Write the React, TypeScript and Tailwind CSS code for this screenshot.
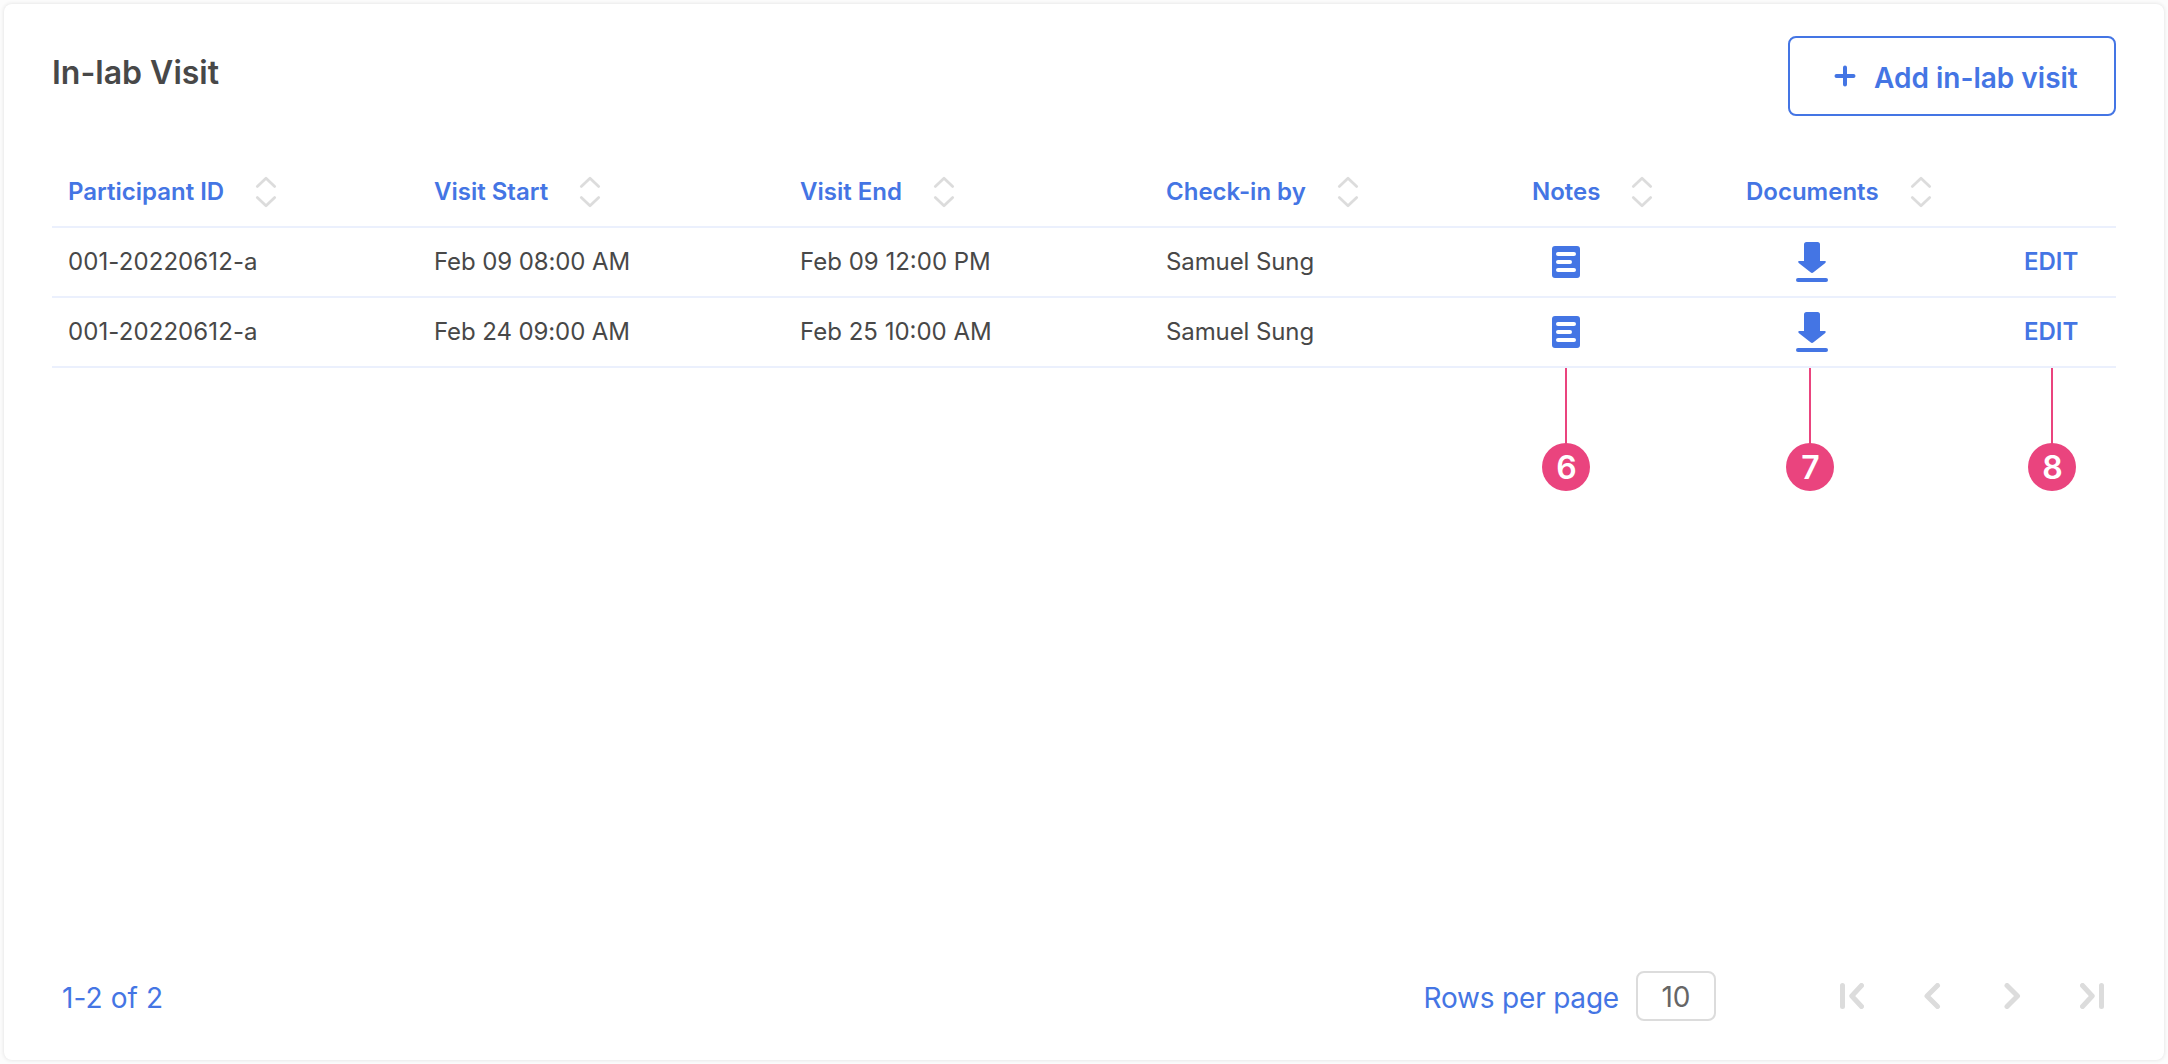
import React from "react";

const BLUE = "#4475e4";

const SortIcon = () => (
  <svg width="24" height="36" viewBox="0 0 24 36" fill="none" stroke="#dcdcdc" strokeWidth="2.8" strokeLinecap="round" strokeLinejoin="round" className="shrink-0">
    <path d="M3.300 12.400 12 4.300 20.700 12.400M3.300 23.600 12 31.700 20.700 23.600" />
  </svg>
);

const NotesIcon = () => (
  <svg width="28" height="32" viewBox="0 0 28 32" className="shrink-0">
    <rect width="28" height="32" rx="3" fill={BLUE} />
    <path d="M6 8H22M6 16H18M6 24H22" stroke="#fff" strokeWidth="4" strokeLinecap="round" />
  </svg>
);

const DownloadIcon = () => (
  <svg width="32" height="40" viewBox="0 0 32 40" fill={BLUE} className="shrink-0">
    <path d="M10.500 0H21.500Q24 0 24 2.500V19H29Q30.500 19.500 29.300 21L17.500 30.300Q16 31.500 14.500 30.300L2.700 21Q1.500 19.500 3 19H8V2.500Q8 0 10.500 0Z" />
    <rect y="36" width="32" height="4" rx="2" />
  </svg>
);

const columns = ["Participant ID", "Visit Start", "Visit End", "Check-in by", "Notes", "Documents"];

const rows = [
  { id: "001-20220612-a", start: "Feb 09 08:00 AM", end: "Feb 09 12:00 PM", by: "Samuel Sung" },
  { id: "001-20220612-a", start: "Feb 24 09:00 AM", end: "Feb 25 10:00 AM", by: "Samuel Sung" },
];

const pagerIcons = [
  "M2.500 2.500V23.500M21.500 2.500 11.800 13 21.500 23.500",
  "M17.500 2.500 7 13 17.500 23.500",
  "M7 2.500 17.500 13 7 23.500",
  "M2.500 2.500 12.200 13 2.500 23.500M21.500 2.500V23.500",
];

const grid = "grid grid-cols-[366px_366px_366px_366px_214px_278px_1fr] items-center pl-4 border-b-2 border-[#ebf0fd]";

const Marker = ({ n, place }: { n: number; place: string }) => (
  <div className={`absolute top-full flex w-12 flex-col items-center ${place}`}>
    <div className="h-[76px] w-[2px] bg-[#ea447e]" />
    <div className="-mt-px flex size-12 items-center justify-center rounded-full bg-[#ea447e] pt-[2px] pl-px text-[32px] leading-none font-semibold text-white">
      {n}
    </div>
  </div>
);

export default function App() {
  return (
    <div className="h-[1064px] w-[2168px] bg-[#fcfcfc] p-1 font-['Inter',sans-serif] text-[#484848]">
      <main className="flex h-[1056px] flex-col rounded-lg bg-white px-12 shadow-[0_0_4px_rgba(0,0,0,0.12)]">
        <header className="flex h-[154px] items-start justify-between pt-8">
          <h1 className="mt-[15px] text-[32px] leading-[44px] font-semibold">In-lab Visit</h1>
          <button className="flex h-20 w-[328px] items-center rounded-lg border-2 border-[#4475e4] pl-[43px] text-[28px] font-semibold text-[#4475e4]">
            <svg width="24" height="24" viewBox="0 0 24 24" fill="none" stroke={BLUE} strokeWidth="4" strokeLinecap="round" className="mr-[17px]">
              <path d="M12 3.500V20.500M3.500 12H20.500" />
            </svg>
            <span className="pt-[3px]">Add in-lab visit</span>
          </button>
        </header>

        <section className="relative text-2xl leading-8">
          <div className={`${grid} h-[70px] font-semibold text-[#4475e4]`}>
            {columns.map((c) => (
              <div key={c} className="flex items-center gap-[30px] whitespace-nowrap">
                {c}
                <SortIcon />
              </div>
            ))}
          </div>
          {rows.map((r, i) => (
            <div key={i} className={`${grid} h-[70px]`}>
              <span className="tracking-[0.1px]">{r.id}</span>
              <span className="tracking-[-0.1px]">{r.start}</span>
              <span>{r.end}</span>
              <span className="tracking-[-0.1px]">{r.by}</span>
              <span className="pl-5"><NotesIcon /></span>
              <span className="pl-[50px]"><DownloadIcon /></span>
              <span className="font-semibold text-[#4475e4]">EDIT</span>
            </div>
          ))}
          <Marker n={6} place="left-[1490px]" />
          <Marker n={7} place="left-[1734px]" />
          <Marker n={8} place="left-[1976px]" />
        </section>

        <footer className="mt-auto mb-[38px] flex h-[52px] items-center text-[28px] text-[#4475e4]">
          <span className="ml-[10px] pt-1 tracking-[0.1px]">1-2 of 2</span>
          <span className="ml-auto pt-1 tracking-[-0.2px]">Rows per page</span>
          <span className="ml-[17px] flex h-[50px] w-20 items-center justify-center rounded-lg border-2 border-[#dcdcdc] pt-[2px] text-[#666]">10</span>
          <div className="mr-3 ml-[124px] flex items-center gap-14">
            {pagerIcons.map((d) => (
              <svg key={d} width="24" height="26" viewBox="0 0 24 26" fill="none" stroke="#dcdcdc" strokeWidth="5" strokeLinecap="round" strokeLinejoin="round">
                <path d={d} />
              </svg>
            ))}
          </div>
        </footer>
      </main>
    </div>
  );
}
